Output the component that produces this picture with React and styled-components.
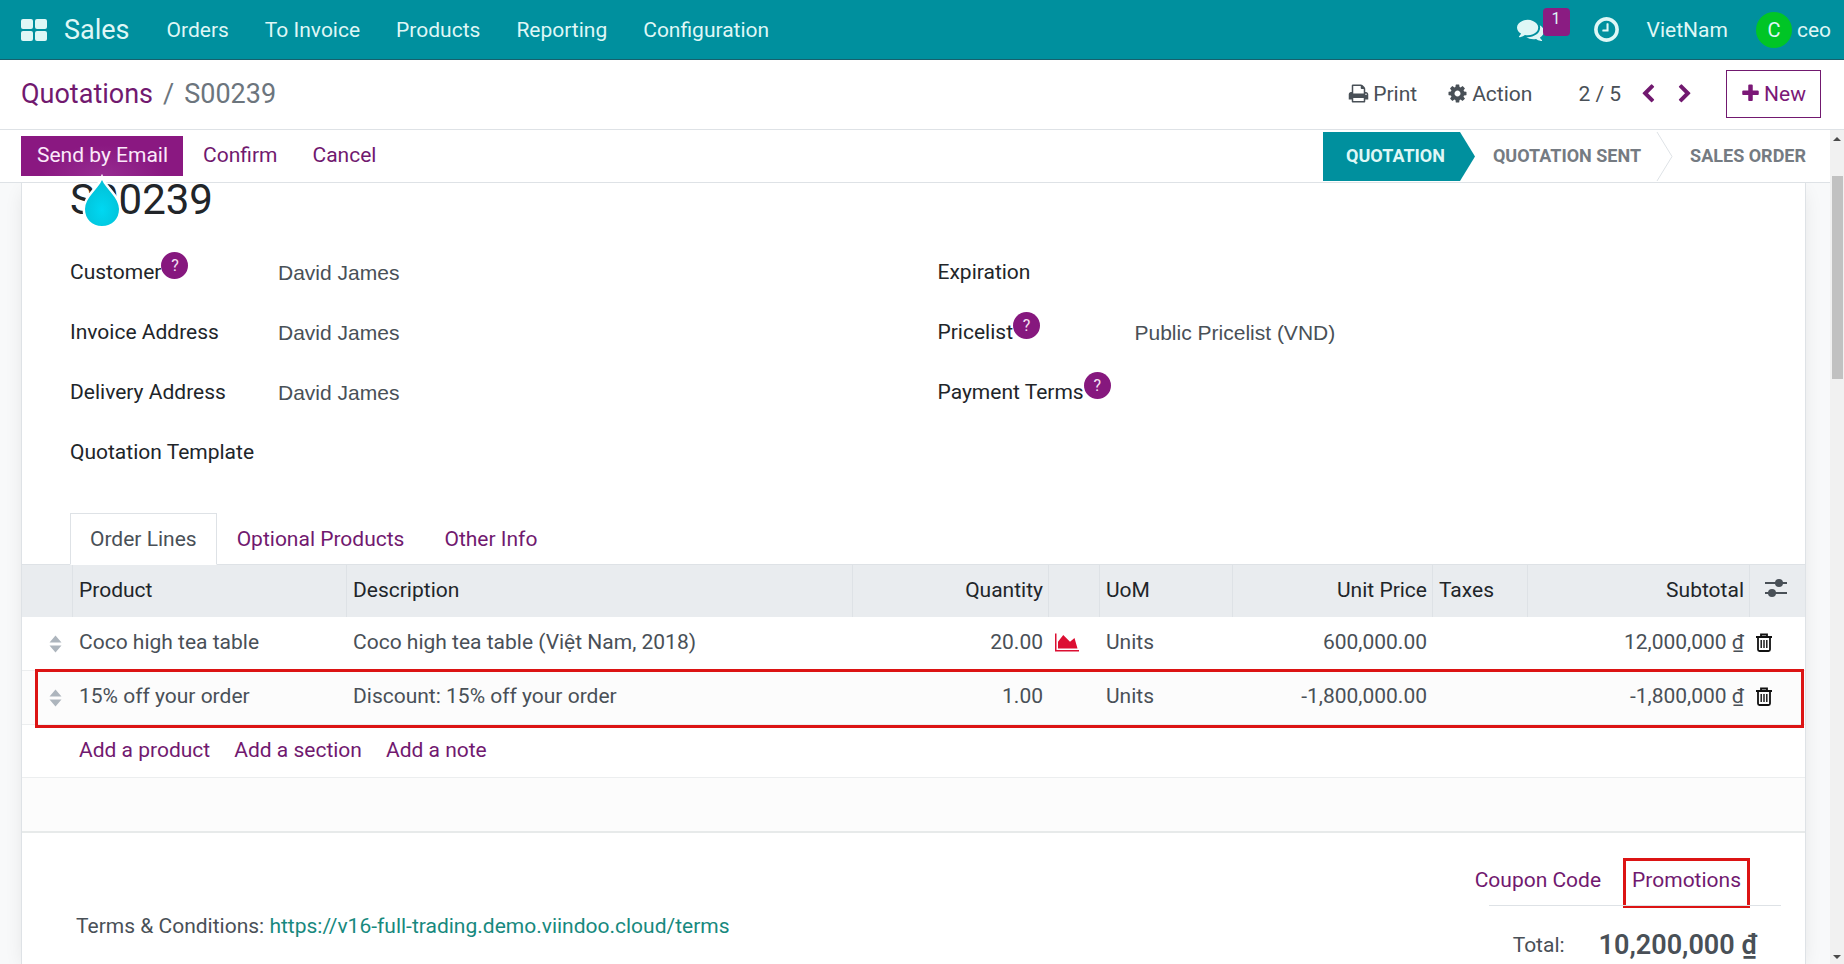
import React, { useState } from 'react';
import styled, { createGlobalStyle, css } from 'styled-components';

const GlobalStyle = createGlobalStyle`
  * { box-sizing: border-box; }

  body {
    margin: 0;
    font-family: Roboto, 'Noto Sans', sans-serif;
    font-size: 21px;
    line-height: 30px;
    color: #495057;
    background: #fff;
  }

  a { text-decoration: none; }

  button {
    font: inherit;
    border: none;
    background: none;
    padding: 0;
    cursor: pointer;
  }
`;

// Layout
const Page = styled.div`
  height: 100vh;
  display: flex;
  flex-direction: column;
  overflow: hidden;
`;

const Workspace = styled.div`
  flex: 1;
  min-height: 0;
  display: flex;
`;

const FormView = styled.main`
  flex: 1;
  min-width: 0;
  display: flex;
  flex-direction: column;
`;

const Scroller = styled.div`
  flex: 1;
  min-height: 0;
  overflow: hidden;
  padding: 0 24px 0 21px;
  background: #f8f9fa;
`;

const Sheet = styled.section`
  min-height: 100%;
  background: #fff;
  border: solid #dee2e6;
  border-width: 0 1px;
  box-shadow: 0 5px 20px -5px rgba(0, 0, 0, 0.12);
`;

// Navbar
const Navbar = styled.header`
  flex: none;
  height: 60px;
  display: flex;
  align-items: center;
  padding: 0 13px 0 21px;
  background: #00909e;
  border-bottom: 1px solid #17606d;
  color: #dff7f6;
`;

const AppsButton = styled.button`
  display: flex;
  margin-right: 17px;
`;

const Brand = styled.a`
  margin-right: 19px;
  font-size: 27px;
  color: inherit;
`;

const Menu = styled.nav`
  display: flex;
  flex: 1;
`;

const MenuLink = styled.a`
  padding: 0 18px;
  color: inherit;
`;

const Systray = styled.div`
  display: flex;
  align-items: center;
`;

const ChatButton = styled.button`
  position: relative;
  display: flex;
  margin-right: 48px;
  color: inherit;
`;

const Counter = styled.span`
  position: absolute;
  left: 26px;
  top: -8px;
  width: 27px;
  height: 28px;
  border-radius: 4px;
  background: #8a1c82;
  font-size: 16px;
  line-height: 22px;
  text-align: center;
`;

const ClockButton = styled.button`
  display: flex;
  margin-right: 26px;
  color: inherit;
`;

const Company = styled.button`
  margin-right: 28px;
  color: inherit;
`;

const UserButton = styled.button`
  display: flex;
  align-items: center;
  gap: 5px;
  color: inherit;
`;

const Avatar = styled.span`
  width: 36px;
  height: 36px;
  border-radius: 50%;
  background: #00c526;
  font-size: 20px;
  line-height: 37px;
  text-align: center;
`;

// Control panel
const ControlPanel = styled.div`
  flex: none;
  height: 70px;
  display: flex;
  align-items: center;
  padding: 0 23px 2px 21px;
  border-bottom: 1px solid #dee2e6;
`;

const Breadcrumb = styled.nav`
  flex: 1;
  display: flex;
  gap: 10px;
  font-size: 27px;
  color: #6c757d;

  a { color: #71196f; }
`;

const PanelButton = styled.button`
  display: flex;
  align-items: center;
  gap: 4px;
  margin-right: 30px;
  color: #495057;
`;

const Pager = styled.div`
  display: flex;
  align-items: center;
  gap: 17px;
  margin: 0 31px 0 16px;
`;

const PagerButton = styled.button`
  display: flex;
  color: #71196f;
`;

const NewButton = styled.button`
  display: flex;
  align-items: center;
  gap: 3px;
  height: 48px;
  padding: 0 14px 0 13px;
  border: 1px solid #71196f;
  color: #7b1877;
`;

// Status bar
const StatusBar = styled.div`
  flex: none;
  height: 53px;
  display: flex;
  align-items: center;
  justify-content: space-between;
  padding-left: 21px;
  border-bottom: 1px solid #dee2e6;
`;

const Actions = styled.div`
  display: flex;
  gap: 4px;
`;

const ActionSlot = styled.div`
  position: relative;
`;

const ActionButton = styled.button`
  height: 40px;
  padding: 0 15px 2px 16px;
  color: #71196f;

  ${({ $primary }) => $primary && css`
    background: radial-gradient(ellipse at 50% 100%, #962c91, #8a1881 55%);
    color: #fbe9fa;
  `}
`;

const TourPointer = styled.svg`
  position: absolute;
  z-index: 2;
  left: 50%;
  top: 37px;
  margin-left: -22px;
  overflow: visible;
`;

const Stages = styled.div`
  display: flex;
  align-items: center;
  font-size: 18px;
  font-weight: 700;
  color: #757b82;
`;

const Stage = styled.button`
  height: 49px;
  padding: 0 15px 0 ${({ $active }) => ($active ? 23 : 18)}px;
  color: inherit;

  ${({ $active }) => $active && css`
    background: #00909e;
    color: #dff7f6;
  `}

  &:last-child { padding: 0 24px 0 17px; }
`;

// Record fields
const Title = styled.h1`
  margin: 0 48px 26px;
  font-size: 42px;
  font-weight: 400;
  line-height: 33px;
  color: #212529;
`;

const FieldGroups = styled.div`
  display: grid;
  grid-template-columns: 1fr 1fr;
  padding: 0 48px;
  column-gap: 48px;
`;

const Field = styled.div`
  display: flex;
  align-items: center;
  height: 60px;
`;

const FieldHead = styled.div`
  flex: none;
  width: ${({ $width }) => $width}px;
  display: flex;
  align-items: center;
  color: #212529;
`;

const Help = styled.span`
  width: 27px;
  height: 27px;
  margin-bottom: 14px;
  border-radius: 50%;
  background: #86187e;
  font-size: 16px;
  line-height: 27px;
  text-align: center;
  color: #f6e3f5;
`;

const FieldInput = styled.input`
  flex: 1;
  min-width: 0;
  padding: 2px 0 0;
  border: none;
  outline: none;
  background: transparent;
  font-family: 'Liberation Sans', Arial, sans-serif;
  font-size: 21px;
  color: #495057;
`;

// Notebook
const Tabs = styled.div`
  display: flex;
  margin-top: 31px;
  padding: 0 48px;
  border-bottom: 1px solid #dee2e6;
`;

const Tab = styled.button`
  height: 52px;
  margin-bottom: -1px;
  padding: 0 19px 1px;
  border: 1px solid transparent;
  color: #71196f;

  ${({ $active }) => $active && css`
    border-color: #dee2e6;
    border-bottom-color: #fff;
    background: #fff;
    color: #495057;
  `}
`;

const Lines = styled.table`
  width: 100%;
  table-layout: fixed;
  border-collapse: separate;
  border-spacing: 0;
  border-bottom: 2px solid #e7eaea;
`;

const HeadCell = styled.th`
  height: 52px;
  padding: 0 5px 2px 6px;
  background: #e9ecef;
  border-left: 1px solid #dee2e6;
  font-weight: 400;
  text-align: ${({ $right }) => ($right ? 'right' : 'left')};
  color: #212529;

  &:first-child { border-left: none; }
  &:last-child { padding: 0 0 0 15px; }
`;

const Line = styled.tr`
  position: relative;
  z-index: ${({ $raised }) => ($raised ? 1 : 0)};
  background: ${({ $striped }) => ($striped ? '#fcfcfc' : '#fff')};
`;

const Cell = styled.td`
  height: 54px;
  padding: 0 5px 3px 7px;
  border-bottom: 1px solid #eceeef;
  text-align: ${({ $right }) => ($right ? 'right' : 'left')};
  white-space: nowrap;

  ${Line}:nth-last-child(-n + 2) & { height: 53px; }
  ${Line}:last-child & { border-bottom: none; }

  svg { display: block; }
`;

const Highlight = styled.span`
  position: absolute;
  inset: -2px 1px -3px 13px;
  border: 3px solid #dc1414;
  pointer-events: none;
`;

const Handle = styled.button`
  display: block;
  margin: 3px 0 0 20px;
  color: #adb5bd;
`;

const IconButton = styled.button`
  display: block;
  color: ${({ $color }) => $color};
`;

const AddLinks = styled.div`
  display: flex;
  gap: 24px;

  a { color: #71196f; }
`;

// Footer
const Footer = styled.footer`
  display: flex;
  justify-content: space-between;
  padding: 25px 24px 0 54px;
`;

const Terms = styled.p`
  margin: 53px 0 0;

  a { color: #17897e; }
`;

const Summary = styled.div`
  display: flex;
  flex-direction: column;
  align-items: flex-end;
`;

const PromoActions = styled.div`
  display: flex;
  align-items: center;
  gap: 13px;
  margin-right: 31px;
`;

const PromoButton = styled.button`
  height: 50px;
  padding: 0 6px 6px;
  border: 3px solid ${({ $marked }) => ($marked ? '#dc1414' : 'transparent')};
  color: #71196f;
`;

const Total = styled.div`
  display: flex;
  align-items: center;
  justify-content: flex-end;
  gap: 34px;
  width: 292px;
  margin-top: -3px;
  padding: 23px 24px 0 0;
  border-top: 1px solid #dee2e6;

  strong {
    font-size: 27px;
    font-weight: 600;
    line-height: 32px;
  }
`;

// Scrollbar
const Scrollbar = styled.div`
  flex: none;
  width: 14px;
  display: flex;
  flex-direction: column;
  align-items: center;
  justify-content: space-between;
  padding: 7px 0 5px;
  background: #f1f1f1;
  color: #4a4a4a;
`;

const Track = styled.div`
  flex: 1;
  width: 11px;
  padding-top: 35px;
`;

const Thumb = styled.div`
  height: 26%;
  min-height: 40px;
  background: #c1c1c1;
`;

const iconPaths = {
  comments: 'M1408 768q0 139-94 257t-256.5 186.5-353.5 68.5q-86 0-176-16-124 88-278 128-36 9-86 16h-3q-11 0-20.5-8t-11.5-21q-1-3-1-6.5t.5-6.5 2-6l2.5-5 3.5-5.5 4-5 4.5-5 4-4.5q5-6 23-25t26-29.5 22.5-29 25-38.5 20.5-44q-124-72-195-177t-71-224q0-139 94-257t256.5-186.5 353.5-68.5 353.5 68.5 256.5 186.5 94 257zm384 256q0 120-71 224.5t-195 176.5q10 24 20.5 44t25 38.5 22.5 29 26 29.5 23 25q1 1 4 4.5t4.5 5 4 5 3.5 5.5l2.5 5 2 6 .5 6.5-1 6.5q-3 14-13 22t-22 7q-50-7-86-16-154-40-278-128-90 16-176 16-271 0-472-132 58 4 88 4 161 0 309-45t264-129q125-92 192-212t67-254q0-77-23-152 129 71 204 178t75 230z',
  clock: 'M1024 544v448q0 14-9 23t-23 9h-320q-14 0-23-9t-9-23v-64q0-14 9-23t23-9h224v-352q0-14 9-23t23-9h64q14 0 23 9t9 23zm416 352q0-148-73-273t-198-198-273-73-273 73-198 198-73 273 73 273 198 198 273 73 273-73 198-198 73-273zm224 0q0 209-103 385.5t-279.5 279.5-385.5 103-385.5-103-279.5-279.5-103-385.5 103-385.5 279.5-279.5 385.5-103 385.5 103 279.5 279.5 103 385.5z',
  print: 'M448 1536h896v-256h-896v256zm0-640h896v-384h-160q-40 0-68-28t-28-68v-160h-640v640zm1152 64q0-26-19-45t-45-19-45 19-19 45 19 45 45 19 45-19 19-45zm128 0v416q0 13-9.5 22.5t-22.5 9.5h-224v160q0 40-28 68t-68 28h-960q-40 0-68-28t-28-68v-160h-224q-13 0-22.5-9.5t-9.5-22.5v-416q0-79 56.5-135.5t135.5-56.5h64v-544q0-40 28-68t68-28h672q40 0 88 20t76 48l152 152q28 28 48 76t20 88v256h64q79 0 135.5 56.5t56.5 135.5z',
  cog: 'M1152 896q0-106-75-181t-181-75-181 75-75 181 75 181 181 75 181-75 75-181zm512-109v222q0 12-8 23t-20 13l-185 28q-19 54-39 91 35 50 107 138 10 12 10 25t-9 23q-27 37-99 108t-94 71q-12 0-26-9l-138-108q-44 23-91 38-16 136-29 186-7 28-36 28h-222q-14 0-24.5-8.5t-11.5-21.5l-28-184q-49-16-90-37l-141 107q-10 9-25 9-14 0-25-11-126-114-165-168-7-10-7-23 0-12 8-23 15-21 51-66.5t54-70.5q-27-50-41-99l-183-27q-13-2-21-12.5t-8-23.5v-222q0-12 8-23t19-13l186-28q14-46 39-92-40-57-107-138-10-12-10-24 0-10 9-23 26-36 98.5-107.5t94.5-71.5q13 0 26 10l138 107q44-23 91-38 16-136 29-186 7-28 36-28h222q14 0 24.5 8.5t11.5 21.5l28 184q49 16 90 37l142-107q9-9 24-9 13 0 25 10 129 119 165 170 7 8 7 22 0 12-8 23-15 21-51 66.5t-54 70.5q26 50 41 98l183 28q13 2 21 12.5t8 23.5z',
  plus: 'M1600 736v192q0 40-28 68t-68 28h-416v416q0 40-28 68t-68 28h-192q-40 0-68-28t-28-68v-416h-416q-40 0-68-28t-28-68v-192q0-40 28-68t68-28h416v-416q0-40 28-68t68-28h192q40 0 68 28t28 68v416h416q40 0 68 28t28 68z',
  left: 'M1427 301l-531 531 531 531q19 19 19 45t-19 45l-166 166q-19 19-45 19t-45-19l-742-742q-19-19-19-45t19-45l742-742q19-19 45-19t45 19l166 166q19 19 19 45t-19 45z',
  right: 'M1363 877l-742 742q-19 19-45 19t-45-19l-166-166q-19-19-19-45t19-45l531-531-531-531q-19-19-19-45t19-45l166-166q19-19 45-19t45 19l742 742q19 19 19 45t-19 45z',
  chart: 'M2048 1536v128h-2048v-1536h128v1408h1920zm-384-1024l256 896h-1664v-576l448-576 576 576z',
};

const Icon = ({ name, width, height = width, viewBox = '0 0 1792 1792' }) => (
  <svg width={width} height={height} viewBox={viewBox} fill="currentColor" aria-hidden="true">
    <path d={iconPaths[name]} />
  </svg>
);

const AppsIcon = () => (
  <svg width="26" height="22" viewBox="0 0 26 22" fill="#dff7f6" aria-hidden="true">
    <rect width="12" height="10" rx="2" />
    <rect x="14" width="12" height="10" rx="2" />
    <rect y="12" width="12" height="10" rx="2" />
    <rect x="14" y="12" width="12" height="10" rx="2" />
  </svg>
);

const SortIcon = () => (
  <svg width="13" height="18" viewBox="0 0 13 18" fill="currentColor" aria-hidden="true">
    <path d="M6.500 0.500L12.500 7.500H.5zM.5 10.500H12.500L6.500 17.500z" />
  </svg>
);

const TrashIcon = () => (
  <svg width="16" height="19" viewBox="0 0 16 19" fill="none" stroke="currentColor" aria-hidden="true">
    <path strokeWidth="1.800" d="M0 4h16M5 4V1.500h6V4M2 4v12.500q0 1.500 1.500 1.500h9q1.500 0 1.500-1.500V4" />
    <path strokeWidth="1.400" d="M5.200 7v8M8 7v8M10.800 7v8" />
  </svg>
);

const SlidersIcon = () => (
  <svg width="22" height="20" viewBox="0 0 22 20" fill="currentColor" aria-hidden="true">
    <path d="M0 4h22v2H0zM0 14h22v2H0z" />
    <circle cx="14" cy="5" r="4" />
    <circle cx="7" cy="15" r="4" />
  </svg>
);

const Pointer = () => (
  <TourPointer width="44" height="58" viewBox="0 0 44 58" aria-hidden="true">
    <defs>
      <radialGradient id="drop" cx="50%" cy="65%" r="55%">
        <stop offset="0" stopColor="#00d8f2" />
        <stop offset="1" stopColor="#02c3da" />
      </radialGradient>
    </defs>
    <path
      d="M22 7C26 16 39 25 39 36c0 10-7 17-17 17S5 46 5 36C5 25 18 16 22 7z"
      fill="url(#drop)"
      stroke="#fff"
      strokeWidth="5"
      paintOrder="stroke"
    />
  </TourPointer>
);

const ChevronDivider = () => (
  <svg width="17" height="49" viewBox="0 0 17 49" fill="none" stroke="#dee2e6" aria-hidden="true">
    <path d="M1 0L16 24.500L1 49" />
  </svg>
);

const ActiveArrow = () => (
  <svg width="15" height="49" viewBox="0 0 15 49" fill="#00909e" aria-hidden="true">
    <path d="M0 0L15 24.500L0 49z" />
  </svg>
);

const menuItems = ['Orders', 'To Invoice', 'Products', 'Reporting', 'Configuration'];

const leftFields = [
  { id: 'customer', label: 'Customer', help: true, value: 'David James' },
  { id: 'invoice', label: 'Invoice Address', value: 'David James' },
  { id: 'delivery', label: 'Delivery Address', value: 'David James' },
  { id: 'template', label: 'Quotation Template', value: '' },
];

const rightFields = [
  { id: 'expiration', label: 'Expiration', value: '' },
  { id: 'pricelist', label: 'Pricelist', help: true, value: 'Public Pricelist (VND)' },
  { id: 'payment', label: 'Payment Terms', help: true, value: '' },
];

const tabs = ['Order Lines', 'Optional Products', 'Other Info'];

const orderLines = [
  {
    product: 'Coco high tea table',
    description: 'Coco high tea table (Việt Nam, 2018)',
    quantity: '20.00',
    forecast: true,
    uom: 'Units',
    price: '600,000.00',
    subtotal: '12,000,000 ₫',
  },
  {
    product: '15% off your order',
    description: 'Discount: 15% off your order',
    quantity: '1.00',
    uom: 'Units',
    price: '-1,800,000.00',
    subtotal: '-1,800,000 ₫',
    highlighted: true,
  },
];

const FieldList = ({ fields, labelWidth }) => (
  <div>
    {fields.map(({ id, label, help, value }) => (
      <Field key={id}>
        <FieldHead $width={labelWidth}>
          <label htmlFor={id}>{label}</label>
          {help && <Help>?</Help>}
        </FieldHead>
        <FieldInput id={id} type="text" defaultValue={value} />
      </Field>
    ))}
  </div>
);

const OrderLines = () => (
  <Lines>
    <colgroup>
      <col width="50" />
      <col width="274" />
      <col />
      <col width="196" />
      <col width="51" />
      <col width="133" />
      <col width="200" />
      <col width="95" />
      <col width="222" />
      <col width="56" />
    </colgroup>
    <thead>
      <tr>
        <HeadCell />
        <HeadCell>Product</HeadCell>
        <HeadCell>Description</HeadCell>
        <HeadCell $right>Quantity</HeadCell>
        <HeadCell />
        <HeadCell>UoM</HeadCell>
        <HeadCell $right>Unit Price</HeadCell>
        <HeadCell>Taxes</HeadCell>
        <HeadCell $right>Subtotal</HeadCell>
        <HeadCell>
          <IconButton $color="#495057" aria-label="Optional columns"><SlidersIcon /></IconButton>
        </HeadCell>
      </tr>
    </thead>
    <tbody>
      {orderLines.map((line, index) => (
        <Line key={line.product} $striped={index % 2 === 1} $raised={line.highlighted}>
          <Cell>
            <Handle aria-label="Move line"><SortIcon /></Handle>
            {line.highlighted && <Highlight />}
          </Cell>
          <Cell>{line.product}</Cell>
          <Cell>{line.description}</Cell>
          <Cell $right>{line.quantity}</Cell>
          <Cell>
            {line.forecast && (
              <IconButton $color="#dc0f32" aria-label="Forecast">
                <Icon name="chart" width={24} height={21} viewBox="0 0 2048 1792" />
              </IconButton>
            )}
          </Cell>
          <Cell>{line.uom}</Cell>
          <Cell $right>{line.price}</Cell>
          <Cell />
          <Cell $right>{line.subtotal}</Cell>
          <Cell>
            <IconButton $color="#111" aria-label="Delete line"><TrashIcon /></IconButton>
          </Cell>
        </Line>
      ))}
      <Line>
        <Cell />
        <Cell colSpan={9}>
          <AddLinks>
            <a href="#product">Add a product</a>
            <a href="#section">Add a section</a>
            <a href="#note">Add a note</a>
          </AddLinks>
        </Cell>
      </Line>
      <Line $striped>
        <Cell colSpan={10} />
      </Line>
    </tbody>
  </Lines>
);

const App = () => {
  const [activeTab, setActiveTab] = useState('Order Lines');

  return (
    <Page>
      <GlobalStyle />
      <Navbar>
        <AppsButton aria-label="Apps"><AppsIcon /></AppsButton>
        <Brand href="#sales">Sales</Brand>
        <Menu>
          {menuItems.map((item) => (
            <MenuLink key={item} href="#menu">{item}</MenuLink>
          ))}
        </Menu>
        <Systray>
          <ChatButton aria-label="Messages">
            <Icon name="comments" width={27} />
            <Counter>1</Counter>
          </ChatButton>
          <ClockButton aria-label="Activities"><Icon name="clock" width={29} /></ClockButton>
          <Company>VietNam</Company>
          <UserButton>
            <Avatar>C</Avatar>
            ceo
          </UserButton>
        </Systray>
      </Navbar>

      <ControlPanel>
        <Breadcrumb>
          <a href="#quotations">Quotations</a>
          <span>/</span>
          <span>S00239</span>
        </Breadcrumb>
        <PanelButton><Icon name="print" width={21} />Print</PanelButton>
        <PanelButton><Icon name="cog" width={21} />Action</PanelButton>
        <Pager>
          <span>2 / 5</span>
          <PagerButton aria-label="Previous"><Icon name="left" width={20} /></PagerButton>
          <PagerButton aria-label="Next"><Icon name="right" width={20} /></PagerButton>
        </Pager>
        <NewButton><Icon name="plus" width={21} />New</NewButton>
      </ControlPanel>

      <Workspace>
        <FormView>
          <StatusBar>
            <Actions>
              <ActionSlot>
                <ActionButton $primary>Send by Email</ActionButton>
                <Pointer />
              </ActionSlot>
              <ActionButton>Confirm</ActionButton>
              <ActionButton>Cancel</ActionButton>
            </Actions>
            <Stages>
              <Stage $active>QUOTATION</Stage>
              <ActiveArrow />
              <Stage>QUOTATION SENT</Stage>
              <ChevronDivider />
              <Stage>SALES ORDER</Stage>
            </Stages>
          </StatusBar>

          <Scroller>
            <Sheet>
              <Title>S00239</Title>
              <FieldGroups>
                <FieldList fields={leftFields} labelWidth={208} />
                <FieldList fields={rightFields} labelWidth={197} />
              </FieldGroups>
              <Tabs role="tablist">
                {tabs.map((tab) => (
                  <Tab
                    key={tab}
                    role="tab"
                    aria-selected={tab === activeTab}
                    $active={tab === activeTab}
                    onClick={() => setActiveTab(tab)}
                  >
                    {tab}
                  </Tab>
                ))}
              </Tabs>
              <OrderLines />
              <Footer>
                <Terms>
                  Terms &amp; Conditions: <a href="#terms">https://v16-full-trading.demo.viindoo.cloud/terms</a>
                </Terms>
                <Summary>
                  <PromoActions>
                    <PromoButton>Coupon Code</PromoButton>
                    <PromoButton $marked>Promotions</PromoButton>
                  </PromoActions>
                  <Total>
                    <span>Total:</span>
                    <strong>10,200,000 ₫</strong>
                  </Total>
                </Summary>
              </Footer>
            </Sheet>
          </Scroller>
        </FormView>

        <Scrollbar aria-hidden="true">
          <svg width="8" height="4" viewBox="0 0 8 4" fill="currentColor"><path d="M0 4L4 0L8 4z" /></svg>
          <Track><Thumb /></Track>
          <svg width="8" height="4" viewBox="0 0 8 4" fill="currentColor"><path d="M0 0L4 4L8 0z" /></svg>
        </Scrollbar>
      </Workspace>
    </Page>
  );
};

export default App;
